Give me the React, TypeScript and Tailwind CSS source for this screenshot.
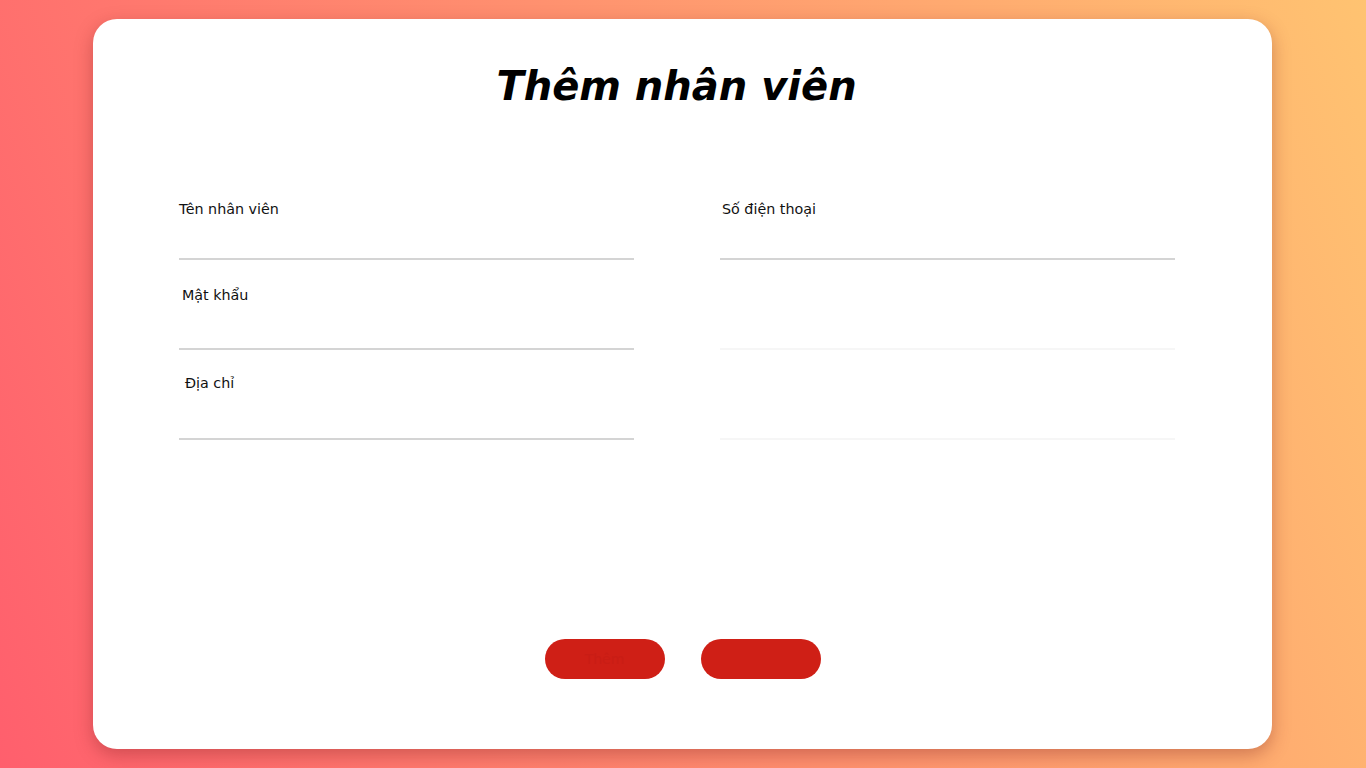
export default function App() {
  const left = [
    { label: "Tên nhân viên", indent: "pl-0" },
    { label: "Mật khẩu", indent: "pl-[3px]" },
    { label: "Địa chỉ", indent: "pl-[6px]" },
  ];
  const right = [
    { label: "Số điện thoại", indent: "pl-[2px]" },
    { label: "", indent: "pl-0" },
    { label: "", indent: "pl-0" },
  ];

  return (
    <div className="min-h-[768px] w-full bg-[linear-gradient(70deg,#ff5f6d,#ffc371)] pt-[19px] font-['DejaVu_Sans',sans-serif]">
      <div className="ml-[93px] flex h-[730px] w-[1179px] flex-col rounded-[24px] bg-white shadow-[0_6px_18px_rgba(120,30,30,0.35)]">
        <h1 className="mt-[43px] pr-[12px] text-center text-[40px] font-bold italic leading-[48px] text-black">
          Thêm nhân viên
        </h1>

        <div className="mt-[91px] ml-[86px] flex gap-[86px]">
          {[left, right].map((col, ci) => (
            <div key={ci} className="flex w-[455px] flex-col">
              {col.map((f, i) => (
                <label key={i} className={`flex flex-col ${i === 0 ? "h-[59px]" : "h-[90px]"}`}>
                  <span
                    className={`${f.indent} ${i === 0 ? "mt-0" : i === 1 ? "mt-[27px]" : "mt-[25px]"} h-[16px] text-[14.3px] leading-[16px] text-[#111]`}
                  >
                    {f.label}
                  </span>
                  <input
                    className={`mt-auto h-[40px] w-full border-b-2 bg-transparent text-[14px] outline-none ${
                      ci === 1 && i > 0 ? "border-[#f6f6f6]" : "border-[#d4d4d4]"
                    }`}
                  />
                </label>
              ))}
            </div>
          ))}
        </div>

        <div className="mt-[199px] flex justify-center gap-[36px]">
          <button className="h-[40px] w-[120px] rounded-full bg-[#cf1f16] text-[14px] text-[#c91d15]">
            Thêm
          </button>
          <button className="h-[40px] w-[120px] rounded-full bg-[#cf1f16] text-[14px] text-[#cf1f16]">
            Hủy
          </button>
        </div>
      </div>
    </div>
  );
}
